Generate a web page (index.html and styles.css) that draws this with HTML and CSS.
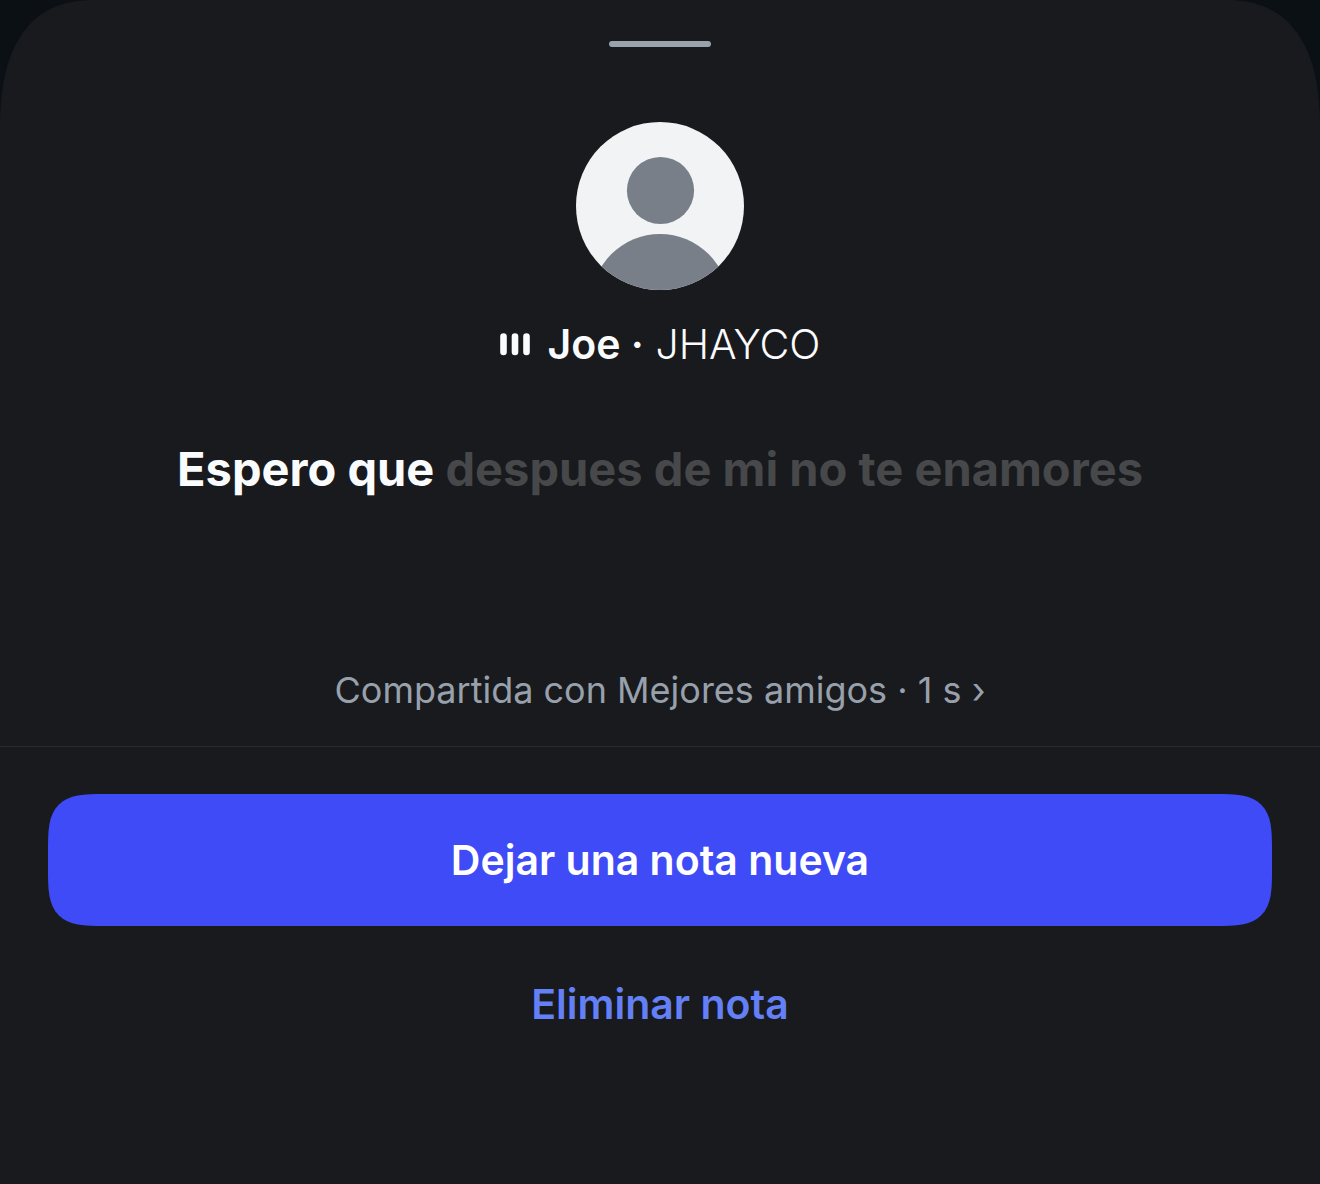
FILE: index.html
```html
<!DOCTYPE html>
<html lang="es">
<head>
<meta charset="utf-8">
<meta name="viewport" content="width=device-width, initial-scale=1">
<title>Nota</title>
<link rel="stylesheet" href="styles.css">
</head>
<body>
<main class="sheet">
  <div class="handle"></div>
  <section class="note">
    <svg class="avatar" viewBox="0 0 168 168" role="img" aria-label="Foto de perfil">
      <defs><clipPath id="round"><circle cx="84" cy="84" r="84"/></clipPath></defs>
      <g clip-path="url(#round)">
        <rect width="168" height="168" fill="#f1f3f5"/>
        <circle cx="84.500" cy="68.500" r="33.600" fill="#787f89"/>
        <circle cx="84" cy="181" r="69" fill="#787f89"/>
      </g>
    </svg>
    <p class="track">
      <svg class="bars" viewBox="0 0 30 24" aria-hidden="true"><path d="M3.500 4.500v15.500M15 4.500v15.500M26.500 4.500v15.500" stroke="#fafbfc" stroke-width="6.600" stroke-linecap="round"/></svg>
      <span><b>Joe ·</b> <span class="artist">JHAYCO</span></span>
    </p>
    <p class="lyrics">Espero que <span class="upcoming">despues de mi no te enamores</span></p>
    <a class="audience" href="#">Compartida con Mejores amigos · 1 s ›</a>
  </section>
  <section class="actions">
    <button class="button primary" type="button">Dejar una nota nueva</button>
    <button class="button plain" type="button">Eliminar nota</button>
  </section>
</main>
</body>
</html>
```
FILE: styles.css
```css
* { box-sizing: border-box; }
body {
  margin: 0;
  background: #0b1014;
  font-family: Inter, "Liberation Sans", sans-serif;
  color: #fafbfc;
}
.sheet {
  min-height: 100vh;
  padding-top: 41px;
  border-radius: 96px 96px 0 0;
  background: #191a1e;
}
.handle {
  width: 102px;
  height: 6px;
  margin: 0 auto;
  border-radius: 3px;
  background: #9aa2ad;
}
.note {
  display: flex;
  flex-direction: column;
  align-items: center;
  padding: 75px 48px 32px;
  border-bottom: 1px solid #292b2f;
}
.avatar { width: 168px; height: 168px; }
.track {
  display: flex;
  align-items: center;
  gap: 18px;
  margin: 29px 0 0;
  font-size: 41px;
  line-height: 50px;
}
.track b { font-weight: 600; }
.artist { font-weight: 300; }
.bars { width: 30px; height: 24px; }
.lyrics {
  margin: 70px 0 0;
  font-size: 47px;
  font-weight: 700;
  line-height: 60px;
  text-align: center;
}
.upcoming { color: #47484a; }
.audience {
  margin-top: 167px;
  font-size: 36px;
  line-height: 48px;
  color: #98a1ab;
  text-decoration: none;
}
.actions {
  display: flex;
  flex-direction: column;
  gap: 12px;
  padding: 47px 48px;
}
.button {
  height: 132px;
  border: 0;
  border-radius: 36px;
  background: none;
  font: 600 41px/50px Inter, "Liberation Sans", sans-serif;
  cursor: pointer;
}
.primary { background: #404bf8; color: #fff; }
.plain { color: #6380f7; }

/* Continuous corners where the browser can draw them */
@supports (corner-shape: superellipse(1.5)) {
  .sheet {
    border-radius: 96px 96px 0 0 / 130px 130px 0 0;
    corner-shape: superellipse(1.3);
  }
  .button {
    border-radius: 56px;
    corner-shape: superellipse(1.7);
  }
}
```
